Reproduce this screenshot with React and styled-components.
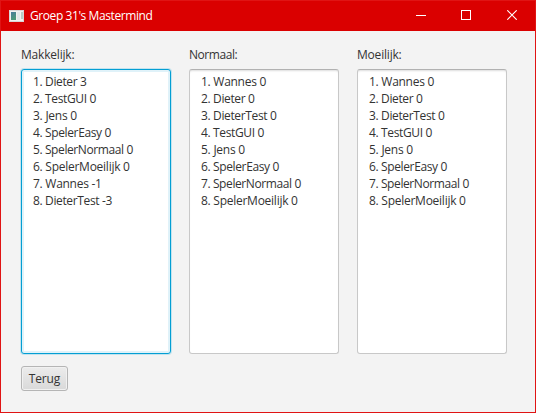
import React from "react";
import styled, { createGlobalStyle } from "styled-components";

const GlobalStyle = createGlobalStyle`
  * { box-sizing: border-box; }
  body { margin: 0; overflow: hidden; }
`;

const Window = styled.div`
  width: 536px;
  height: 413px;
  display: flex;
  flex-direction: column;
  border: 1px solid #e01414;
  background: #f3f3f3;
  color: #333333;
  font: 12px/17px "Open Sans", "Noto Sans", sans-serif;
`;

const TitleBar = styled.header`
  height: 30px;
  flex: none;
  display: flex;
  align-items: center;
  padding-left: 8px;
  background: #da0000;
  color: #ffffff;
`;

const Title = styled.h1`
  flex: 1;
  margin: -1px 0 0 6px;
  font-size: 12px;
  font-weight: 400;
  line-height: 17px;
  letter-spacing: -0.42px;
`;

const WindowButton = styled.button`
  width: ${(p) => p.$width || 45}px;
  height: 30px;
  padding: 0 0 2px;
  border: 0;
  background: transparent;
  display: flex;
  align-items: center;
  justify-content: center;
`;

const WindowControls = styled.div`
  display: flex;
`;

const Content = styled.main`
  display: flex;
  flex-direction: column;
  align-items: flex-start;
  gap: 12px;
  padding: 15px 20px;
`;

const Columns = styled.div`
  display: grid;
  grid-template-columns: repeat(3, 150px);
  gap: 18px;
`;

const Label = styled.h2`
  margin: 0 0 6px;
  font-size: 12px;
  font-weight: 400;
  line-height: 17px;
  letter-spacing: ${(p) => p.$spacing}px;
`;

const ScoreBox = styled.ol`
  height: 285px;
  margin: 0;
  padding: 3px 11px;
  list-style: none;
  background: #ffffff;
  border: 1px solid ${(p) => (p.$focused ? "#039ed3" : "#c8c8c8")};
  border-top-color: ${(p) => (p.$focused ? "#039ed3" : "#b1b1b1")};
  border-radius: 3px;
  box-shadow: ${(p) =>
    p.$focused
      ? "0 0 0 1px #c3e3ee, inset 0 0 0 2px #e0f2f9"
      : "inset 0 2px 2px -1px #dedede"};
`;

const Score = styled.li`
  height: 17px;
  white-space: pre;
  letter-spacing: ${(p) => p.$spacing}px;
`;

const BackButton = styled.button`
  width: 47px;
  height: 25px;
  padding: 0;
  border: 1px solid #b5b5b5;
  border-radius: 3px;
  background: linear-gradient(#ececec, #d9d9d9);
  box-shadow: inset 0 0 0 1px #f1f1f1;
  color: #333333;
  font: inherit;
  letter-spacing: -0.15px;
`;

const tracking = {
  Dieter: -0.36,
  TestGUI: -0.36,
  Jens: -0.25,
  SpelerEasy: -0.37,
  SpelerNormaal: -0.4,
  SpelerMoeilijk: -0.26,
  Wannes: -0.27,
  DieterTest: -0.36,
};

const others = [
  ["Wannes", 0],
  ["Dieter", 0],
  ["DieterTest", 0],
  ["TestGUI", 0],
  ["Jens", 0],
  ["SpelerEasy", 0],
  ["SpelerNormaal", 0],
  ["SpelerMoeilijk", 0],
];

const lists = [
  {
    label: "Makkelijk:",
    spacing: -0.2,
    focused: true,
    scores: [
      ["Dieter", 3],
      ["TestGUI", 0],
      ["Jens", 0],
      ["SpelerEasy", 0],
      ["SpelerNormaal", 0],
      ["SpelerMoeilijk", 0],
      ["Wannes", -1],
      ["DieterTest", -3],
    ],
  },
  { label: "Normaal:", spacing: -0.45, scores: others },
  { label: "Moeilijk:", spacing: -0.2, scores: others },
];

function AppIcon() {
  return (
    <svg width="15" height="12" viewBox="0 0 15 12" shapeRendering="crispEdges">
      <defs>
        <linearGradient id="screen" x1="0" y1="0" x2="0.4" y2="1">
          <stop offset="0" stopColor="#4a7b9c" />
          <stop offset="1" stopColor="#4d9a78" />
        </linearGradient>
      </defs>
      <rect width="15" height="12" fill="#d9d5d5" />
      <rect x="1" y="1" width="13" height="10" fill="#f2f2f0" />
      <rect x="2" y="2" width="5" height="8" fill="url(#screen)" />
      <rect x="8" y="2" width="3" height="8" fill="#e3e8e8" />
      <rect x="12" y="2" width="2" height="7" fill="#b9cfc6" />
    </svg>
  );
}

export default function App() {
  return (
    <>
      <GlobalStyle />
      <Window>
        <TitleBar>
          <AppIcon />
          <Title>Groep 31's Mastermind</Title>
          <WindowControls>
            <WindowButton aria-label="Minimize">
              <svg width="10" height="10" shapeRendering="crispEdges">
                <path d="M0 5.5H10" stroke="#fff" />
              </svg>
            </WindowButton>
            <WindowButton aria-label="Maximize">
              <svg width="10" height="10" shapeRendering="crispEdges">
                <path d="M.5 .5H9.5V9.5H.5Z" fill="none" stroke="#fff" />
              </svg>
            </WindowButton>
            <WindowButton aria-label="Close" $width={47}>
              <svg width="10" height="10">
                <path d="M.3 .3L9.7 9.7M9.7 .3L.3 9.7" stroke="#fff" strokeWidth="1.1" />
              </svg>
            </WindowButton>
          </WindowControls>
        </TitleBar>
        <Content>
          <Columns>
            {lists.map((list) => (
              <section key={list.label}>
                <Label $spacing={list.spacing}>{list.label}</Label>
                <ScoreBox $focused={list.focused}>
                  {list.scores.map(([name, points], i) => (
                    <Score key={name} $spacing={tracking[name]}>
                      {`${i + 1}. ${name} ${points}`}
                    </Score>
                  ))}
                </ScoreBox>
              </section>
            ))}
          </Columns>
          <BackButton>Terug</BackButton>
        </Content>
      </Window>
    </>
  );
}
